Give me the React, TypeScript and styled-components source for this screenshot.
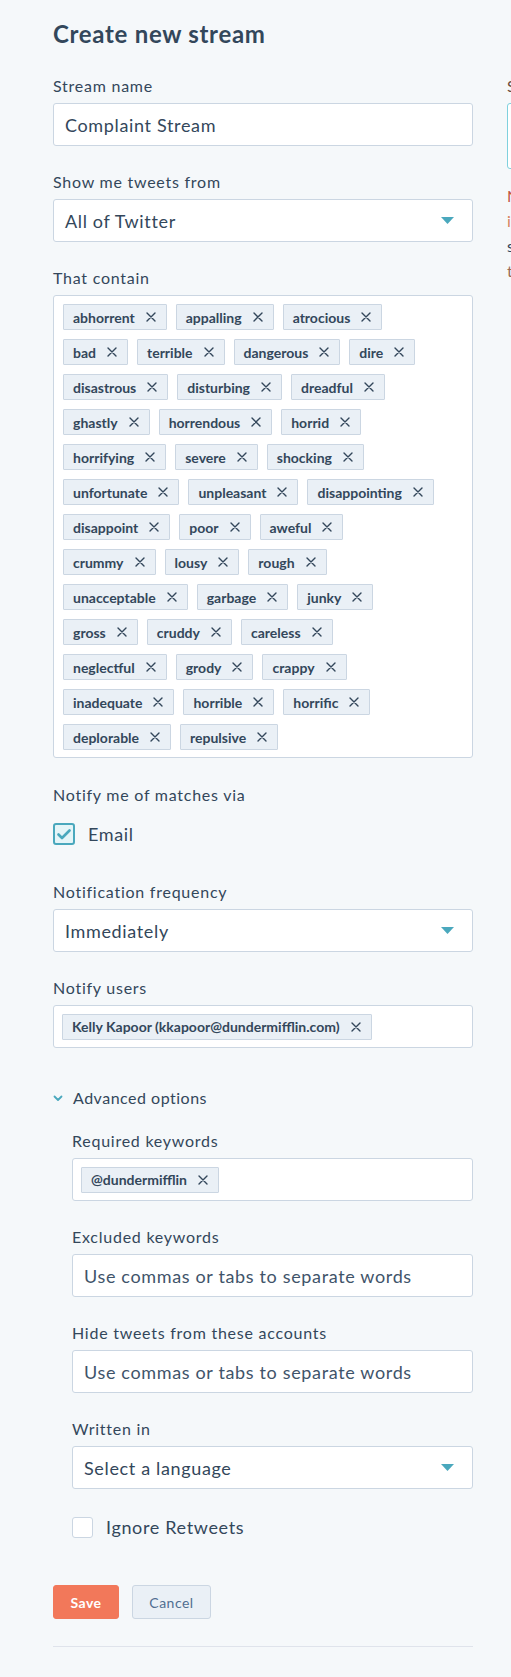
import styled, { createGlobalStyle } from 'styled-components'

const slate = '#33475b'
const border = '#cbd6e2'
const teal = '#4aa8bd'

const keywords = [
	'abhorrent', 'appalling', 'atrocious', 'bad', 'terrible', 'dangerous', 'dire',
	'disastrous', 'disturbing', 'dreadful', 'ghastly', 'horrendous', 'horrid',
	'horrifying', 'severe', 'shocking', 'unfortunate', 'unpleasant', 'disappointing',
	'disappoint', 'poor', 'aweful', 'crummy', 'lousy', 'rough', 'unacceptable',
	'garbage', 'junky', 'gross', 'cruddy', 'careless', 'neglectful', 'grody',
	'crappy', 'inadequate', 'horrible', 'horrific', 'deplorable', 'repulsive',
]

const GlobalStyle = createGlobalStyle`
	html, body {
		margin: 0;
		padding: 0;
		background: #f5f8fa;
	}
	body {
		font-family: Lato, 'Open Sans', sans-serif;
		color: ${slate};
	}
	* {
		box-sizing: border-box;
	}
`

const CloseIcon = () => (
	<svg width="10" height="10" viewBox="0 0 10 10">
		<path d="M1 1 L9 9 M9 1 L1 9" stroke={slate} strokeWidth="1.4" strokeLinecap="round" />
	</svg>
)

const Caret = () => (
	<svg width="13" height="7" viewBox="0 0 13 7">
		<path d="M0 0 H13 L6.5 7 Z" fill={teal} />
	</svg>
)

const Tag = ({ label }: { label: string }) => (
	<TagChip>
		{label}
		<CloseIcon />
	</TagChip>
)

const App = () => {
	return (
		<>
			<GlobalStyle />
			<Page>
				<Main>
					<Title>Create new stream</Title>

					<Field>
						<Label>Stream name</Label>
						<TextBox>Complaint Stream</TextBox>
					</Field>

					<Field>
						<Label>Show me tweets from</Label>
						<SelectBox>
							All of Twitter
							<Caret />
						</SelectBox>
					</Field>

					<Field $gap={27}>
						<Label>That contain</Label>
						<TagBox>
							{keywords.map((k) => (
								<Tag key={k} label={k} />
							))}
						</TagBox>
					</Field>

					<Field $gap={37}>
						<Label>Notify me of matches via</Label>
						<CheckRow $top={18}>
							<CheckBox $checked>
								<svg width="14" height="11" viewBox="0 0 14 11">
									<path d="M1.5 5.5 L5 9 L12.5 1.5" fill="none" stroke={teal} strokeWidth="2.6" strokeLinecap="round" strokeLinejoin="round" />
								</svg>
							</CheckBox>
							Email
						</CheckRow>
					</Field>

					<Field>
						<Label>Notification frequency</Label>
						<SelectBox>
							Immediately
							<Caret />
						</SelectBox>
					</Field>

					<Field $gap={40}>
						<Label>Notify users</Label>
						<TagInput>
							<Tag label="Kelly Kapoor (kkapoor@dundermifflin.com)" />
						</TagInput>
					</Field>

					<Toggle>
						<svg width="10" height="7" viewBox="0 0 10 7">
							<path d="M1.5 1.5 L5 5 L8.5 1.5" fill="none" stroke={teal} strokeWidth="1.8" strokeLinecap="round" strokeLinejoin="round" />
						</svg>
						Advanced options
					</Toggle>

					<Advanced>
						<Field>
							<Label>Required keywords</Label>
							<TagInput>
								<Tag label="@dundermifflin" />
							</TagInput>
						</Field>

						<Field>
							<Label>Excluded keywords</Label>
							<TextBox $placeholder>Use commas or tabs to separate words</TextBox>
						</Field>

						<Field>
							<Label>Hide tweets from these accounts</Label>
							<TextBox $placeholder>Use commas or tabs to separate words</TextBox>
						</Field>

						<Field $gap={0}>
							<Label>Written in</Label>
							<SelectBox>
								Select a language
								<Caret />
							</SelectBox>
						</Field>

						<CheckRow $top={27}>
							<CheckBox />
							Ignore Retweets
						</CheckRow>
					</Advanced>

					<Actions>
						<PrimaryButton>Save</PrimaryButton>
						<SecondaryButton>Cancel</SecondaryButton>
					</Actions>

					<Divider />
				</Main>

				<Side>
					<SideLabel>Stream preview</SideLabel>
					<PreviewBox />
					<SideLine $color="#c0533e">No tweets yet</SideLine>
					<SideLine $color="#d7825f">in this stream</SideLine>
					<SideLine $color={slate}>so far today</SideLine>
					<SideLine $color="#9a6b55">try more words</SideLine>
				</Side>
			</Page>
		</>
	)
}

export default App

const Page = styled.div`
	display: flex;
	gap: 34px;
	padding: 18px 0 0 53px;
	min-height: 1677px;
	width: 100%;
	overflow: hidden;
`

const Main = styled.div`
	width: 420px;
	flex-shrink: 0;
`

const Title = styled.h1`
	margin: 0 0 26px;
	font-size: 24px;
	line-height: 32px;
	font-weight: 700;
	letter-spacing: 0.7px;
	color: ${slate};
`

const Field = styled.div<{ $gap?: number }>`
	margin-bottom: ${(p) => (p.$gap ?? 26)}px;
`

const Label = styled.div`
	font-size: 16px;
	line-height: 20px;
	letter-spacing: 0.75px;
	margin-bottom: 7px;
	color: ${slate};
`

const Control = styled.div`
	height: 43px;
	background: #fff;
	border: 1px solid ${border};
	border-radius: 3px;
	display: flex;
	align-items: center;
	font-size: 18px;
	letter-spacing: 0.65px;
	color: ${slate};
`

const TextBox = styled(Control)<{ $placeholder?: boolean }>`
	padding: 0 11px;
	color: ${(p) => (p.$placeholder ? '#3f546a' : slate)};
`

const SelectBox = styled(Control)`
	padding: 0 18px 0 11px;
	justify-content: space-between;
`

const TagInput = styled(Control)`
	padding: 0 8px;
	letter-spacing: normal;
`

const TagBox = styled.div`
	background: #fff;
	border: 1px solid ${border};
	border-radius: 3px;
	padding: 8px 35px 7px 9px;
	display: flex;
	flex-wrap: wrap;
	gap: 9px;
`

const TagChip = styled.span`
	display: inline-flex;
	align-items: center;
	gap: 11px;
	height: 26px;
	padding: 0 10px 0 9px;
	background: #eaf0f6;
	border: 1px solid ${border};
	border-radius: 1px;
	font-size: 14px;
	font-weight: 700;
	color: ${slate};
	white-space: nowrap;
`

const CheckRow = styled.label<{ $top: number }>`
	display: flex;
	align-items: center;
	gap: 13px;
	margin-top: ${(p) => p.$top}px;
	font-size: 18px;
	letter-spacing: 0.65px;
	line-height: 22px;
	color: ${slate};
`

const CheckBox = styled.span<{ $checked?: boolean }>`
	flex-shrink: 0;
	width: ${(p) => (p.$checked ? 22 : 21)}px;
	height: ${(p) => (p.$checked ? 22 : 21)}px;
	border-radius: 3px;
	display: inline-flex;
	align-items: center;
	justify-content: center;
	border: ${(p) => (p.$checked ? `2px solid ${teal}` : `1px solid ${border}`)};
	background: ${(p) => (p.$checked ? '#e5f5f8' : '#fff')};
`

const Toggle = styled.div`
	display: flex;
	align-items: center;
	gap: 10px;
	font-size: 16px;
	letter-spacing: 0.5px;
	line-height: 20px;
	color: ${slate};
	margin-bottom: 23px;
`

const Advanced = styled.div`
	padding-left: 19px;
`

const Actions = styled.div`
	display: flex;
	gap: 13px;
	margin-top: 47px;
`

const Button = styled.button`
	height: 34px;
	border-radius: 3px;
	font-family: inherit;
	font-size: 14px;
	letter-spacing: 0.5px;
	padding: 0;
`

const PrimaryButton = styled(Button)`
	width: 66px;
	background: #f2785a;
	border: 1px solid #f2785a;
	color: #fff;
	font-weight: 700;
`

const SecondaryButton = styled(Button)`
	width: 79px;
	background: #eaf0f6;
	border: 1px solid ${border};
	color: #506e91;
`

const Divider = styled.hr`
	margin: 27px 0 0;
	border: none;
	border-top: 1px solid #dfe3eb;
`

const Side = styled.div`
	width: 300px;
	flex-shrink: 0;
	padding-top: 58px;
`

const SideLabel = styled.div`
	font-size: 16px;
	line-height: 20px;
	color: #6b4b3e;
	margin-bottom: 7px;
`

const PreviewBox = styled.div`
	height: 66px;
	background: #fff;
	border: 1px solid #7fd1de;
	border-radius: 3px;
	margin-bottom: 14px;
`

const SideLine = styled.div<{ $color: string }>`
	font-size: 16px;
	line-height: 25px;
	white-space: nowrap;
	color: ${(p) => p.$color};
`
